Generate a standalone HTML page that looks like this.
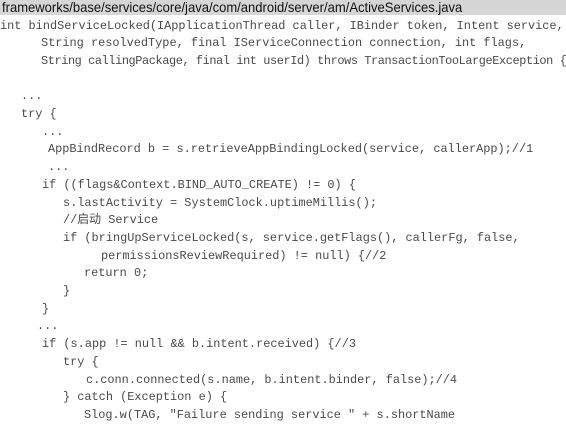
<!DOCTYPE html>
<html><head><meta charset="utf-8"><style>
html,body{margin:0;padding:0;background:#fff;width:566px;height:421px;overflow:hidden}
.h{position:absolute;left:0;top:0;width:566px;height:15px;background:#d6d6d6;}
.h span{position:absolute;left:2px;top:0;font:14px/15px "Liberation Sans",sans-serif;color:#111;white-space:nowrap;transform:scaleX(0.93);transform-origin:0 0}
.l{position:absolute;left:0;font:11.9px/17.7px "Liberation Mono","Noto Sans CJK SC",monospace;color:#4a4a4a;white-space:pre;height:17.7px}
</style></head><body>
<div class="h"><span>frameworks/base/services/core/java/com/android/server/am/ActiveServices.java</span></div>
<div class="l" style="top:17.5px;left:0">int bindServiceLocked(IApplicationThread caller, IBinder token, Intent service,</div>
<div class="l" style="top:35.2px;left:41px">String resolvedType, final IServiceConnection connection, int flags,</div>
<div class="l" style="top:52.9px;left:41px;letter-spacing:-0.4px">String callingPackage, final int userId) throws TransactionTooLargeException {</div>
<div class="l" style="top:88.3px;left:21px">...</div>
<div class="l" style="top:106px;left:21px">try {</div>
<div class="l" style="top:123.7px;left:42px">...</div>
<div class="l" style="top:141.4px;left:48px">AppBindRecord b = s.retrieveAppBindingLocked(service, callerApp);//1</div>
<div class="l" style="top:159.1px;left:48px">...</div>
<div class="l" style="top:176.8px;left:42px">if ((flags&amp;Context.BIND_AUTO_CREATE) != 0) {</div>
<div class="l" style="top:194.5px;left:63px">s.lastActivity = SystemClock.uptimeMillis();</div>
<div class="l" style="top:212.2px;left:63px">//启动 Service</div>
<div class="l" style="top:229.9px;left:63px">if (bringUpServiceLocked(s, service.getFlags(), callerFg, false,</div>
<div class="l" style="top:247.6px;left:101px">permissionsReviewRequired) != null) {//2</div>
<div class="l" style="top:265.3px;left:84px">return 0;</div>
<div class="l" style="top:283px;left:63px">}</div>
<div class="l" style="top:300.7px;left:42px">}</div>
<div class="l" style="top:318.4px;left:37px">...</div>
<div class="l" style="top:336.1px;left:42px">if (s.app != null &amp;&amp; b.intent.received) {//3</div>
<div class="l" style="top:353.8px;left:63px">try {</div>
<div class="l" style="top:371.5px;left:86px">c.conn.connected(s.name, b.intent.binder, false);//4</div>
<div class="l" style="top:389.2px;left:63px">} catch (Exception e) {</div>
<div class="l" style="top:406.9px;left:84px">Slog.w(TAG, "Failure sending service " + s.shortName</div>
</body></html>
